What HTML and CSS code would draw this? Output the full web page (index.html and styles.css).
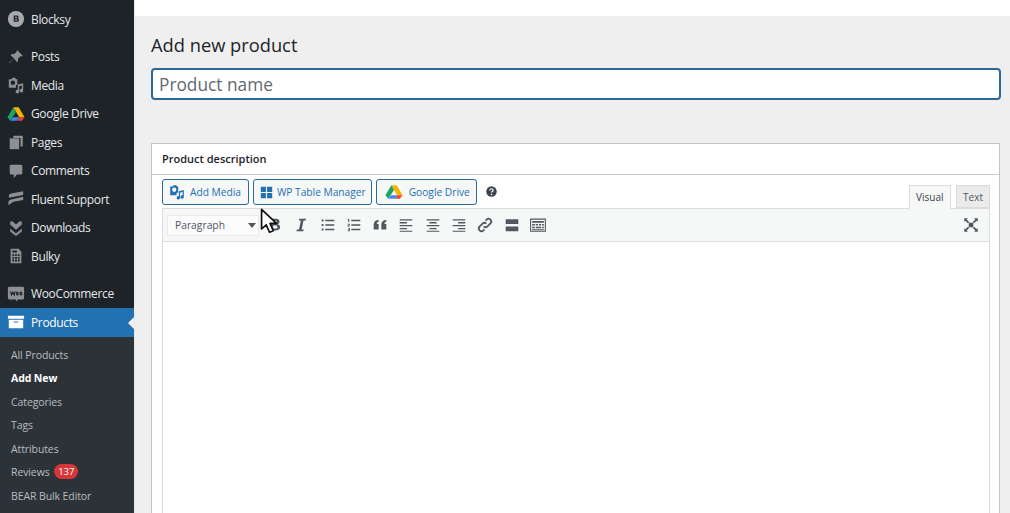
FILE: index.html
```html
<!DOCTYPE html>
<html lang="en">
<head>
<meta charset="utf-8">
<title>Add new product</title>
<link rel="stylesheet" href="styles.css">
</head>
<body>
<div class="app">
  <aside class="sidebar">
    <nav class="group group-top">
      <a class="item"><svg class="ic" viewBox="0 0 20 20"><circle cx="10" cy="10" r="9" fill="#a7aaad"/><path d="M7.500 6h3.400c1.300 0 2 .7 2 1.800 0 .7-.4 1.200-.9 1.500.8.200 1.300.9 1.300 1.700 0 1.300-.9 2.100-2.300 2.100H7.500zM9 8.800h1.500c.5 0 .8-.3.8-.7s-.3-.7-.8-.7H9zm0 3h1.800c.6 0 .9-.3.9-.8s-.3-.8-.9-.8H9z" fill="#1d2327"/></svg><span>Blocksy</span></a>
    </nav>
    <nav class="group">
      <a class="item"><svg class="ic" viewBox="0 0 20 20"><path fill="#8c8f94" d="M11.500 2.500l6 6-1.200 1-1-.5-3.300 3.200c.5 1.500.2 2.800-.7 3.800L7.700 11.400 3 16.500l-1 .5.500-1 5-4.700L3.900 7.700c1-.9 2.300-1.200 3.800-.7L11 3.800l-.5-.9z"/></svg><span>Posts</span></a>
      <a class="item"><svg class="ic" viewBox="0 0 20 20"><path fill="#8c8f94" fill-rule="evenodd" d="M2 3.500h3l1-1.500h3l1 1.500h1.500V10H10v3H2zM6.500 5a2.500 2.500 0 1 0 0 5 2.500 2.500 0 0 0 0-5z"/><path fill="#8c8f94" d="M18 8v8.200a2 2 0 1 1-1.500-1.900V10.500l-3 .8v6a2 2 0 1 1-1.500-1.900V9.500z"/></svg><span>Media</span></a>
      <a class="item"><svg class="ic" viewBox="0 0 20 20"><use href="#gdrive"/></svg><span>Google Drive</span></a>
      <a class="item"><svg class="ic" viewBox="0 0 20 20"><path fill="#8c8f94" d="M7 3h10.500v12H15V5.500H7z"/><path fill="#8c8f94" d="M3 6h10.500v12H3z"/></svg><span>Pages</span></a>
      <a class="item"><svg class="ic" viewBox="0 0 20 20"><path fill="#8c8f94" d="M4.500 3h11A1.500 1.500 0 0 1 17 4.500v8a1.500 1.500 0 0 1-1.500 1.500H11l-3.500 4v-4h-3A1.500 1.500 0 0 1 3 12.500v-8A1.500 1.500 0 0 1 4.500 3z"/></svg><span>Comments</span></a>
      <a class="item"><svg class="ic" viewBox="0 0 20 20"><path fill="#8c8f94" d="M18 1.500v4L2 8.500V7c0-1.500 1-2.500 2.500-3zM18 7.500v3.500L7 13 1.500 17v-3c0-2 1.500-3 3-3.500z"/></svg><span>Fluent Support</span></a>
      <a class="item"><svg class="ic" viewBox="0 0 20 20"><path fill="#8c8f94" d="M3.500 3l2.500-.5L10 6l4-3.500 2.500.5v3L10 12 3.500 6zM3.500 10.500L10 16l6.500-5.500v3.500L10 19l-6.500-5z"/></svg><span>Downloads</span></a>
      <a class="item"><svg class="ic" viewBox="0 0 20 20"><path fill="#8c8f94" fill-rule="evenodd" d="M4 2h9l3 3.500V18H4zM6 8v2h2V8zm3 0v2h2V8zm3 0v2h2V8zM6 11v2h2v-2zm3 0v2h2v-2zm3 0v2h2v-2zM6 14v2h2v-2zm3 0v2h2v-2zm3 0v2h2v-2zM6 4v2h5V4z"/></svg><span>Bulky</span></a>
    </nav>
    <nav class="group">
      <a class="item"><svg class="ic" viewBox="0 0 20 20"><path fill="#8c8f94" d="M2.500 2h15A1.500 1.500 0 0 1 19 3.500v11a1.500 1.500 0 0 1-1.500 1.500H12l-2 2.500V16H2.500A1.500 1.500 0 0 1 1 14.500v-11A1.500 1.500 0 0 1 2.500 2z"/><path fill="none" stroke="#1d2327" stroke-width="1.300" d="M4 7l1 4 1.500-3 1.500 3 1-4M11.500 8a1 1.500 0 1 0 .01 0M15.500 8a1 1.500 0 1 0 .01 0"/></svg><span>WooCommerce</span></a>
      <a class="item item-current"><svg class="ic" viewBox="0 0 20 20"><path fill="#fff" fill-rule="evenodd" d="M1 3h18v3.500H1zM2 7.500h16V17H2zM7.500 9.500v1h5v-1z"/></svg><span>Products</span></a>
    </nav>
    <nav class="submenu">
      <a class="sub">All Products</a>
      <a class="sub sub-current">Add New</a>
      <a class="sub">Categories</a>
      <a class="sub">Tags</a>
      <a class="sub">Attributes</a>
      <a class="sub">Reviews <b class="badge">137</b></a>
      <a class="sub">BEAR Bulk Editor</a>
    </nav>
  </aside>

  <main class="main">
    <div class="topbar"></div>
    <div class="content">
      <h1 class="title">Add new product</h1>
      <div class="name-input">Product name</div>
      <section class="box">
        <h2 class="box-head">Product description</h2>
        <div class="box-body">
          <div class="media-row">
            <div class="media-buttons">
              <button class="btn btn-media"><svg class="btn-ic" viewBox="0 0 20 20"><path fill="#2271b1" fill-rule="evenodd" d="M1.500 3h3l1-1.500h3.500l1 1.500h1.500V11H9.500v3h-8zM6.500 4.500a2.700 2.700 0 1 0 0 5.400 2.700 2.700 0 0 0 0-5.400z"/><path fill="#2271b1" d="M18.500 7.500v8.700a2.100 2.100 0 1 1-1.500-2V10l-3.200.8v6.400a2.100 2.100 0 1 1-1.500-2V9z"/></svg>Add Media</button>
              <button class="btn btn-table"><svg class="btn-ic btn-ic-sm" viewBox="0 0 16 16"><path fill="#2271b1" d="M1 1h6.300v6.300H1zM8.700 1H15v6.300H8.700zM1 8.700h6.300V15H1zM8.700 8.700H15V15H8.700z"/></svg>WP Table Manager</button>
              <button class="btn"><svg class="btn-ic btn-ic-lg" viewBox="0 0 20 20"><use href="#gdrive"/></svg>Google Drive</button>
              <svg class="help" viewBox="0 0 20 20"><circle cx="10" cy="10" r="9.500" fill="#3c434a"/><path fill="none" stroke="#fff" stroke-width="2.200" d="M7 8c0-2 1.300-3 3-3s3 1 3 2.700c0 2.300-3 2.300-3 4.300"/><circle cx="10" cy="15.200" r="1.400" fill="#fff"/></svg>
            </div>
            <div class="tabs">
              <span class="tab tab-active">Visual</span>
              <span class="tab">Text</span>
            </div>
          </div>
          <div class="editor">
            <div class="toolbar">
              <div class="select">Paragraph<i class="caret"></i></div>
              <svg class="tool" viewBox="0 0 20 20"><path fill="#50575e" d="M5 3h6c2.500 0 4 1.300 4 3.300 0 1.300-.7 2.300-2 2.800 1.700.4 2.700 1.600 2.700 3.200 0 2.400-1.800 3.700-4.700 3.700H5zm3 2.300V8.300h2.500c1 0 1.500-.6 1.500-1.500s-.5-1.500-1.500-1.500zm0 5.200v3.300h2.800c1.200 0 1.800-.6 1.800-1.700s-.6-1.600-1.800-1.600z"/></svg>
              <svg class="tool" viewBox="0 0 20 20"><path fill="#50575e" d="M8 3h7.500l-.4 2h-2.300L10.700 15H13l-.4 2H5l.4-2h2.400L9.900 5H7.600z"/></svg>
              <svg class="tool" viewBox="0 0 20 20"><path fill="#50575e" d="M3 4h2v2H3zM7 4.300h10v1.400H7zM3 9h2v2H3zM7 9.300h10v1.400H7zM3 14h2v2H3zM7 14.300h10v1.400H7z"/></svg>
              <svg class="tool" viewBox="0 0 20 20"><path fill="#50575e" d="M7 4.300h10v1.400H7zM7 9.300h10v1.400H7zM7 14.300h10v1.400H7zM3.500 3.200h1.200v3.600H3.500V4.200H3zM3 8.500h2.500v1L4 10.800h1.500v.9H2.800v-1l1.600-1.300H3zM3 13.300h2.500v3.700H3v-.8h1.600v-.7H3.400v-.7h1.200V14H3z"/></svg>
              <svg class="tool" viewBox="0 0 20 20"><path fill="#50575e" d="M8.500 4.500v2c-1.500.4-2 1.200-2 2.500H8.500v6H3V9.500c0-3 2-5 5.500-5zM17 4.500v2c-1.500.4-2 1.200-2 2.500h2v6h-5.500V9.500c0-3 2-5 5.500-5z"/></svg>
              <svg class="tool" viewBox="0 0 20 20"><path fill="#50575e" d="M3 3.500h14V5H3zM3 6.800h8v1.400H3zM3 10h14v1.400H3zM3 13.200h8v1.400H3zM3 16.300h14v1.200H3z"/></svg>
              <svg class="tool" viewBox="0 0 20 20"><path fill="#50575e" d="M3 3.500h14V5H3zM6 6.800h8v1.400H6zM3 10h14v1.400H3zM6 13.200h8v1.400H6zM3 16.300h14v1.200H3z"/></svg>
              <svg class="tool" viewBox="0 0 20 20"><path fill="#50575e" d="M3 3.500h14V5H3zM9 6.800h8v1.400H9zM3 10h14v1.400H3zM9 13.200h8v1.400H9zM3 16.300h14v1.200H3z"/></svg>
              <svg class="tool" viewBox="0 0 20 20"><path fill="none" stroke="#50575e" stroke-width="2" d="M8.500 11.500a3 3 0 0 0 4.200 0l3.600-3.600a3 3 0 0 0-4.200-4.200l-1.500 1.500M11.500 8.500a3 3 0 0 0-4.200 0l-3.600 3.600a3 3 0 0 0 4.200 4.200l1.500-1.500"/></svg>
              <svg class="tool" viewBox="0 0 20 20"><path fill="#50575e" d="M3 3.500h14v5.300H3zM3 11.700h14V17H3z"/></svg>
              <svg class="tool" viewBox="0 0 20 20"><path fill="none" stroke="#50575e" stroke-width="1.200" d="M1.800 3.500h16.400v13.500H1.800z"/><path fill="#50575e" d="M3.500 5.500h13v2h-13zM3.500 9h3v1.500h-3zM7.500 9h2.500v1.500H7.500zM11 9h2.500v1.500H11zM14.500 9h2v1.500h-2zM3.500 12h3v1.500h-3zM7.500 12h6v1.500h-6zM14.500 12h2v1.500h-2zM3.500 14.800h13v1h-13z"/></svg>
              <svg class="tool tool-end" viewBox="0 0 20 20"><path fill="#50575e" d="M7.500 7.500h5v5h-5zM2.500 2.500L6.500 2.500 5.200 3.800 8 6.600 6.600 8 3.800 5.200 2.500 6.500zM17.500 2.500v4l-1.300-1.300L13.400 8 12 6.600l2.800-2.800L13.500 2.500zM2.500 17.500v-4l1.300 1.300L6.600 12 8 13.400l-2.800 2.800 1.300 1.300zM17.500 17.500h-4l1.300-1.300L12 13.400l1.400-1.400 2.800 2.800 1.300-1.300z"/></svg>
            </div>
            <div class="editor-area"></div>
          </div>
        </div>
      </section>
    </div>
  </main>
</div>

<svg class="cursor" viewBox="0 0 20 30"><path fill="#fff" stroke="#111" stroke-width="1.800" stroke-linejoin="round" d="M1.500 1.500v21l5-4.500 3.500 8 4-1.700-3.500-7.800h7z"/></svg>

<svg class="defs" width="0" height="0" aria-hidden="true"><defs>
  <g id="gdrive">
    <path fill="#f4b400" d="M7 2.500h6l6.500 11h-6z"/>
    <path fill="#1fa463" d="M7 2.500l3 5.200-6.300 9.800-3.200-4z"/>
    <path fill="#4285f4" d="M3.700 17.500l3.100-4h7l-2.500 4z"/>
    <path fill="#ea4335" d="M13.800 13.500h5.700l-3 4h-5.200z"/>
  </g>
</defs></svg>
</body>
</html>
```
FILE: styles.css
```css
* { box-sizing: border-box; }
html, body { margin: 0; height: 100%; overflow: hidden; background: #f0f0f1; }
body { font-family: "Open Sans", "Noto Sans", sans-serif; color: #1d2327; position: relative; }
.defs { position: absolute; }
.app { display: flex; height: 513px; overflow: hidden; }

.sidebar { width: 135px; flex: none; background: #1d2327; padding-top: 5px; border-right: 1px solid #e8e8e9; }
.group { display: flex; flex-direction: column; margin-top: 9px; }
.group-top { margin-top: 0; }
.item { display: flex; align-items: center; height: 28.500px; padding-left: 7px; color: #e6e8e9; font-size: 12px; letter-spacing: -.35px; }
.ic { width: 18px; height: 18px; margin-right: 6px; flex: none; }
.item-current { background: #2271b1; color: #fff; position: relative; }
.item-current::after { content: ""; position: absolute; right: 0; top: 9px; border: 6px solid transparent; border-right-color: #f0f0f1; border-left-width: 0; }
.submenu { display: flex; flex-direction: column; background: #2c3338; padding-top: 7px; height: 180px; }
.sub { display: block; height: 23.500px; line-height: 23.500px; padding-left: 11px; font-size: 10.500px; letter-spacing: -.1px; color: #b9bcbf; white-space: nowrap; }
.sub-current { color: #fff; font-weight: 700; }
.badge { display: inline-block; background: #d63638; color: #fff; border-radius: 8px; height: 15px; line-height: 15px; padding: 0 4px; font-size: 9.500px; font-weight: 400; margin-left: 2px; vertical-align: 1px; }

.main { flex: 1; min-width: 0; display: flex; flex-direction: column; background: #efefef; }
.topbar { height: 16px; background: #fff; flex: none; }
.content { padding: 17px 10px 0 16px; }
.title { margin: 0; font-size: 18.300px; line-height: 24px; font-weight: 400; color: #1d2327; }
.name-input { margin: 11px -1px 0 0; height: 32px; background: #fff; border: 2px solid #2a6a9a; border-radius: 4px; padding-left: 6px; font-size: 17.300px; line-height: 30px; color: #646970; }

.box { margin-top: 43px; background: #fff; border: 1px solid #c3c4c7; height: 400px; }
.box-head { margin: 0; height: 31px; border-bottom: 1px solid #c9cacc; padding-left: 10px; font-size: 11px; line-height: 29px; font-weight: 600; color: #1d2327; }
.box-body { padding: 0 9px 0 10px; }
.media-row { display: flex; justify-content: space-between; align-items: flex-end; height: 33px; }
.media-buttons { display: flex; align-items: center; gap: 4px; align-self: flex-start; padding-top: 4px; }
.btn { display: flex; align-items: center; height: 26px; border: 1px solid #2c6a97; border-radius: 3px; background: #f6f7f7; color: #2271b1; font: 10.200px/1 "Open Sans", "Noto Sans", sans-serif; padding: 0 6px; white-space: nowrap; }
.btn-media { padding-right: 7px; }
.btn-table { padding-right: 5px; }
.btn-ic { width: 16px; height: 16px; margin-right: 5px; }
.btn-ic-sm { width: 13px; height: 13px; margin-right: 4px; }
.btn-ic-lg { width: 18px; height: 18px; margin-left: 2px; margin-right: 6px; }
.help { width: 11px; height: 11px; margin-left: 5px; margin-bottom: 2px; }
.tabs { display: flex; gap: 5px; align-items: flex-end; }
.tab { display: block; height: 23px; line-height: 22px; padding: 0 6px; background: #ebebeb; border: 1px solid #dcdcde; font-size: 10px; color: #50575e; }
.tab-active { background: #f6f7f7; height: 24px; padding: 0 6.500px; border-bottom-color: #f6f7f7; color: #3c434a; margin-bottom: -1px; position: relative; }
.editor { border: 1px solid #dcdcde; border-bottom: 0; }
.toolbar { display: flex; align-items: center; height: 33px; background: #f6f7f7; border-bottom: 1px solid #dcdcde; padding-left: 4px; position: relative; }
.select { display: flex; align-items: center; justify-content: space-between; width: 92px; height: 21px; background: #fbfbfb; border: 1px solid #eaeaeb; padding: 0 2px 0 7px; font-size: 10.300px; color: #50575e; margin-right: 7px; }
.caret { width: 0; height: 0; border: 4px solid transparent; border-top: 5px solid #50575e; border-bottom: 0; }
.tool { width: 18px; height: 18px; margin-right: 8.300px; flex: none; }
.tool-end { margin-left: auto; margin-right: 9px; }
.editor-area { height: 300px; background: #fff; }

.cursor { position: absolute; left: 260px; top: 208px; width: 19px; height: 28px; }
```
